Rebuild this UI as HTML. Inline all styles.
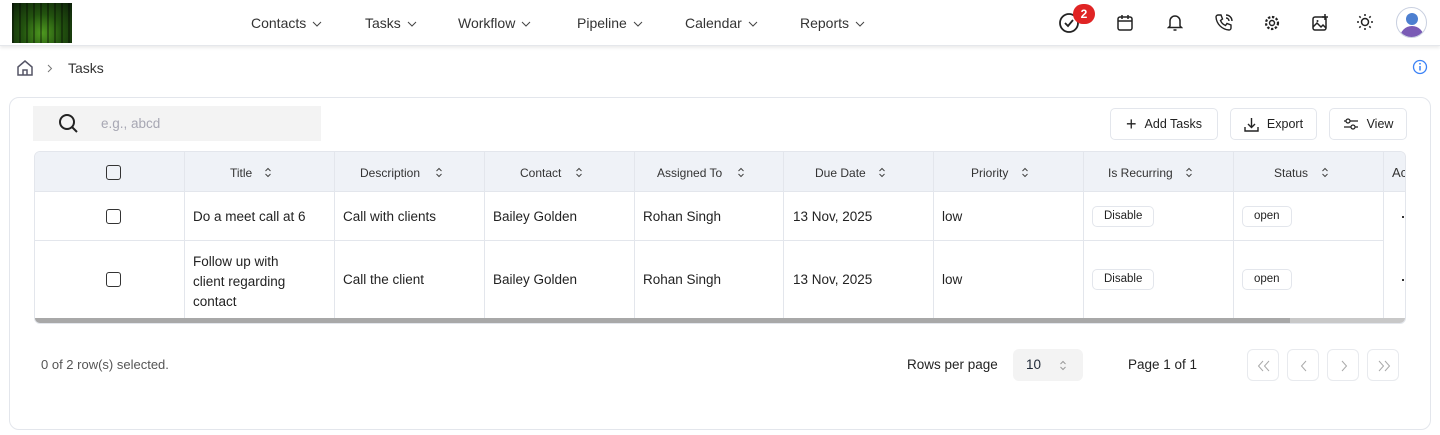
<!DOCTYPE html>
<html><head><meta charset="utf-8"><style>
*{box-sizing:border-box;margin:0;padding:0}
body{width:1440px;height:435px;background:#fff;font-family:"Liberation Sans",sans-serif;color:#1f2937;position:relative;overflow:hidden}
.abs{position:absolute}
.hdr{position:absolute;left:0;top:0;width:1440px;height:46px;background:#fff;box-shadow:0 2px 3px rgba(0,0,0,.08);border-bottom:1px solid #e5e7eb}
.nav{position:absolute;top:15px;font-size:14px;color:#333}
.nav svg{vertical-align:middle;margin-left:6px}
.ic{position:absolute;top:12px}
.card{position:absolute;left:9px;top:97px;width:1422px;height:333px;border:1px solid #e3e6ec;border-radius:10px}
.btn{position:absolute;top:108px;height:32px;border:1px solid #e3e6ec;border-radius:5px;font-size:12.5px;color:#222;display:flex;align-items:center;justify-content:center;gap:8px}
.tbl{position:absolute;left:34px;top:151px;width:1372px;height:173px;border:1px solid #e3e6ec;border-radius:6px;overflow:hidden}
.col{position:absolute;top:0;height:167px;border-left:1px solid #e3e6ec}
.th{position:absolute;top:0;height:40px;left:0;right:0;background:#eff2f7;border-bottom:1px solid #e3e6ec}
.r1{position:absolute;top:40px;height:49px;left:0;width:1349px;border-bottom:1px solid #e3e6ec}
.t{position:absolute;font-size:13.5px;color:#222}
.h{position:absolute;top:14px;font-size:12px;color:#333}
.cb{position:absolute;width:15px;height:15px;border:1.5px solid #333;border-radius:3px}
.badge{position:absolute;height:21px;border:1px solid #e3e6ec;border-radius:5px;font-size:11.5px;padding:3px 11px;color:#222}
.pb{position:absolute;top:349px;width:32px;height:32px;border:1px solid #e8eaee;border-radius:6px}
.pb svg{position:absolute;left:9px;top:10px}
</style></head><body>
<div class="hdr"></div>
<div class="abs" style="left:12px;top:3px;width:60px;height:40px;background:repeating-linear-gradient(90deg,rgba(0,0,0,.35) 0 2px,transparent 2px 7px),radial-gradient(circle at 50% 75%,#4f9a20,#23540f 45%,#0d200a)"></div>
<div class="nav" style="left:251px">Contacts<svg width="10" height="6"><path d="M1 1l4 4 4-4" stroke="#444" fill="none"/></svg></div>
<div class="nav" style="left:365px">Tasks<svg width="10" height="6"><path d="M1 1l4 4 4-4" stroke="#444" fill="none"/></svg></div>
<div class="nav" style="left:458px">Workflow<svg width="10" height="6"><path d="M1 1l4 4 4-4" stroke="#444" fill="none"/></svg></div>
<div class="nav" style="left:577px">Pipeline<svg width="10" height="6"><path d="M1 1l4 4 4-4" stroke="#444" fill="none"/></svg></div>
<div class="nav" style="left:685px">Calendar<svg width="10" height="6"><path d="M1 1l4 4 4-4" stroke="#444" fill="none"/></svg></div>
<div class="nav" style="left:800px">Reports<svg width="10" height="6"><path d="M1 1l4 4 4-4" stroke="#444" fill="none"/></svg></div>
<svg class="ic" style="left:1058px;top:12px" width="22" height="22"><circle cx="11" cy="11" r="9" stroke="#222" stroke-width="1.8" fill="none"/><path d="M7 11l3 3 5-6" stroke="#222" stroke-width="1.8" fill="none"/></svg>
<div class="abs" style="left:1073px;top:4px;width:22px;height:20px;border-radius:10px;background:#e02424;color:#fff;font-size:12px;font-weight:bold;text-align:center;line-height:20px">2</div>
<svg class="ic" style="left:1117px;top:14px" width="16" height="18"><rect x="1" y="3" width="14" height="13" rx="2" stroke="#222" stroke-width="1.5" fill="none"/><path d="M1 7h14M5 1v4M11 1v4" stroke="#222" stroke-width="1.5"/></svg>
<svg class="ic" style="left:1167px;top:13px" width="16" height="19"><path d="M3 13V8a5 5 0 0110 0v5l1.5 1.5h-13zM6.5 17h3" stroke="#222" stroke-width="1.5" fill="none"/></svg>
<svg class="ic" style="left:1215px;top:14px" width="18" height="18"><path d="M3 1l3 0 1.5 4-2 1.5a9 9 0 005 5l1.5-2 4 1.5v3a2 2 0 01-2 2A14 14 0 011 3a2 2 0 012-2zM11 1a6 6 0 016 6M11 4a3 3 0 013 3" stroke="#222" stroke-width="1.4" fill="none"/></svg>
<svg class="ic" style="left:1264px;top:15px" width="16" height="16"><circle cx="8" cy="8" r="2.5" stroke="#222" stroke-width="1.4" fill="none"/><circle cx="8" cy="8" r="6" stroke="#222" stroke-width="2.2" stroke-dasharray="2.4 1.6" fill="none"/></svg>
<svg class="ic" style="left:1312px;top:14px" width="17" height="17"><rect x="1" y="3" width="13" height="13" rx="2" stroke="#222" stroke-width="1.5" fill="none"/><path d="M1 13l4-4 4 4 2-2 3 3M13 0v6M10 3h6" stroke="#222" stroke-width="1.5" fill="none"/><circle cx="5.5" cy="7" r="1" fill="#222"/></svg>
<svg class="ic" style="left:1356px;top:13px" width="18" height="18"><circle cx="9" cy="9" r="3.5" stroke="#222" stroke-width="1.5" fill="none"/><path d="M9 1v2M9 15v2M1 9h2M15 9h2M3.3 3.3l1.4 1.4M13.3 13.3l1.4 1.4M3.3 14.7l1.4-1.4M13.3 4.7l1.4-1.4" stroke="#222" stroke-width="1.5"/></svg>
<div class="abs" style="left:1396px;top:7px;width:31px;height:31px;border-radius:50%;border:1px solid #c9d0e0;overflow:hidden;background:#fff"><div class="abs" style="left:9px;top:5px;width:12px;height:12px;border-radius:50%;background:#4d7fd0"></div><div class="abs" style="left:3px;top:18px;width:24px;height:16px;border-radius:12px 12px 0 0;background:#7a5bb5"></div></div>
<svg class="abs" style="left:16px;top:59px" width="18" height="18"><path d="M2 8l7-6 7 6v8H2zM7 16v-5h4v5" stroke="#556" stroke-width="1.5" fill="none"/></svg>
<svg class="abs" style="left:47px;top:64px" width="6" height="9"><path d="M1 1l3.5 3.5L1 8" stroke="#777" fill="none"/></svg>
<div class="abs" style="left:68px;top:60px;font-size:14px;color:#333">Tasks</div>
<svg class="abs" style="left:1412px;top:59px" width="16" height="16"><circle cx="8" cy="8" r="6.5" stroke="#3b82f6" stroke-width="1.3" fill="none"/><path d="M8 7v4.5" stroke="#3b82f6" stroke-width="1.5"/><circle cx="8" cy="4.8" r=".9" fill="#3b82f6"/></svg>
<div class="card"></div>
<div class="abs" style="left:33px;top:106px;width:288px;height:35px;background:#f3f3f3"></div>
<svg class="abs" style="left:58px;top:113px" width="22" height="22"><circle cx="9" cy="9" r="7" stroke="#222" stroke-width="2" fill="none"/><path d="M14 14l5 5" stroke="#222" stroke-width="2"/></svg>
<div class="abs" style="left:101px;top:116px;font-size:13.5px;color:#a7a7b3">e.g., abcd</div>
<div class="btn" style="left:1110px;width:108px"><span style="font-size:18px;font-weight:300">+</span>Add Tasks</div>
<div class="btn" style="left:1230px;width:87px"><svg width="15" height="15"><path d="M7.5 1v9M4 7l3.5 3.5L11 7M1 10v4h13v-4" stroke="#222" stroke-width="1.4" fill="none"/></svg>Export</div>
<div class="btn" style="left:1329px;width:78px"><svg width="16" height="14"><path d="M1 4h14M1 10h14" stroke="#222" stroke-width="1.2"/><circle cx="5" cy="4" r="2" fill="#fff" stroke="#222" stroke-width="1.2"/><circle cx="10" cy="10" r="2" fill="#fff" stroke="#222" stroke-width="1.2"/></svg>View</div>
<div class="tbl">
<div class="th"></div>
<div class="r1"></div>
<div class="col" style="left:149px"></div><div class="col" style="left:299px"></div><div class="col" style="left:449px"></div><div class="col" style="left:599px"></div><div class="col" style="left:748px"></div><div class="col" style="left:898px"></div><div class="col" style="left:1048px"></div><div class="col" style="left:1198px"></div><div class="col" style="left:1348px;top:40px;height:127px"></div><div class="col" style="left:1348px;height:40px"></div>
<div class="cb" style="left:71px;top:13px"></div>
<div class="h" style="left:195px">Title</div>
<div class="h" style="left:325px">Description</div>
<div class="h" style="left:485px">Contact</div>
<div class="h" style="left:622px">Assigned To</div>
<div class="h" style="left:780px">Due Date</div>
<div class="h" style="left:936px">Priority</div>
<div class="h" style="left:1073px">Is Recurring</div>
<div class="h" style="left:1239px">Status</div>
<div class="h" style="left:1357px;font-size:13px;top:13px">Ac</div>
<svg class="abs" style="left:229px;top:15px" width="8" height="11"><path d="M1.5 4l2.5-2.5L6.5 4M1.5 7l2.5 2.5L6.5 7" stroke="#444" fill="none"/></svg>
<svg class="abs" style="left:400px;top:15px" width="8" height="11"><path d="M1.5 4l2.5-2.5L6.5 4M1.5 7l2.5 2.5L6.5 7" stroke="#444" fill="none"/></svg>
<svg class="abs" style="left:540px;top:15px" width="8" height="11"><path d="M1.5 4l2.5-2.5L6.5 4M1.5 7l2.5 2.5L6.5 7" stroke="#444" fill="none"/></svg>
<svg class="abs" style="left:702px;top:15px" width="8" height="11"><path d="M1.5 4l2.5-2.5L6.5 4M1.5 7l2.5 2.5L6.5 7" stroke="#444" fill="none"/></svg>
<svg class="abs" style="left:843px;top:15px" width="8" height="11"><path d="M1.5 4l2.5-2.5L6.5 4M1.5 7l2.5 2.5L6.5 7" stroke="#444" fill="none"/></svg>
<svg class="abs" style="left:986px;top:15px" width="8" height="11"><path d="M1.5 4l2.5-2.5L6.5 4M1.5 7l2.5 2.5L6.5 7" stroke="#444" fill="none"/></svg>
<svg class="abs" style="left:1150px;top:15px" width="8" height="11"><path d="M1.5 4l2.5-2.5L6.5 4M1.5 7l2.5 2.5L6.5 7" stroke="#444" fill="none"/></svg>
<svg class="abs" style="left:1286px;top:15px" width="8" height="11"><path d="M1.5 4l2.5-2.5L6.5 4M1.5 7l2.5 2.5L6.5 7" stroke="#444" fill="none"/></svg>
<div class="cb" style="left:71px;top:57px"></div>
<div class="t" style="left:158px;top:57px">Do a meet call at 6</div>
<div class="t" style="left:308px;top:57px">Call with clients</div>
<div class="t" style="left:458px;top:57px">Bailey Golden</div>
<div class="t" style="left:608px;top:57px">Rohan Singh</div>
<div class="t" style="left:758px;top:57px">13 Nov, 2025</div>
<div class="t" style="left:907px;top:57px">low</div>
<div class="badge" style="left:1057px;top:54px">Disable</div>
<div class="badge" style="left:1207px;top:54px">open</div>
<div class="abs" style="left:1367px;top:64px;width:2px;height:2px;background:#333"></div>
<div class="cb" style="left:71px;top:120px"></div>
<div class="t" style="left:158px;top:100px;line-height:20px">Follow up with<br>client regarding<br>contact</div>
<div class="t" style="left:308px;top:120px">Call the client</div>
<div class="t" style="left:458px;top:120px">Bailey Golden</div>
<div class="t" style="left:608px;top:120px">Rohan Singh</div>
<div class="t" style="left:758px;top:120px">13 Nov, 2025</div>
<div class="t" style="left:907px;top:120px">low</div>
<div class="badge" style="left:1057px;top:117px">Disable</div>
<div class="badge" style="left:1207px;top:117px">open</div>
<div class="abs" style="left:1367px;top:127px;width:2px;height:2px;background:#333"></div>
<div class="abs" style="left:0;top:166px;width:1372px;height:6px;background:#c8c8c8"></div>
<div class="abs" style="left:0;top:166px;width:1255px;height:6px;background:#a8a8a8"></div>
</div>
<div class="abs" style="left:41px;top:357px;font-size:13px;color:#555">0 of 2 row(s) selected.</div>
<div class="abs" style="left:907px;top:357px;font-size:13.5px;color:#222">Rows per page</div>
<div class="abs" style="left:1013px;top:349px;width:70px;height:32px;background:#f3f3f3;border-radius:6px;font-size:13.5px;padding:8px 13px">10<svg style="position:absolute;left:46px;top:11px" width="8" height="11"><path d="M1.5 4l2.5-2.5L6.5 4M1.5 7l2.5 2.5L6.5 7" stroke="#999" fill="none"/></svg></div>
<div class="abs" style="left:1128px;top:357px;font-size:13.5px;color:#222">Page 1 of 1</div>
<div class="pb" style="left:1247px"><svg width="14" height="12"><path d="M6 1L1.5 6 6 11M12 1L7.5 6 12 11" stroke="#aaa" fill="none"/></svg></div>
<div class="pb" style="left:1287px"><svg width="14" height="12"><path d="M9 1L4.5 6 9 11" stroke="#aaa" fill="none"/></svg></div>
<div class="pb" style="left:1327px"><svg width="14" height="12"><path d="M5 1l4.5 5L5 11" stroke="#aaa" fill="none"/></svg></div>
<div class="pb" style="left:1367px"><svg width="14" height="12"><path d="M2 1l4.5 5L2 11M8 1l4.5 5L8 11" stroke="#aaa" fill="none"/></svg></div>
</body></html>
